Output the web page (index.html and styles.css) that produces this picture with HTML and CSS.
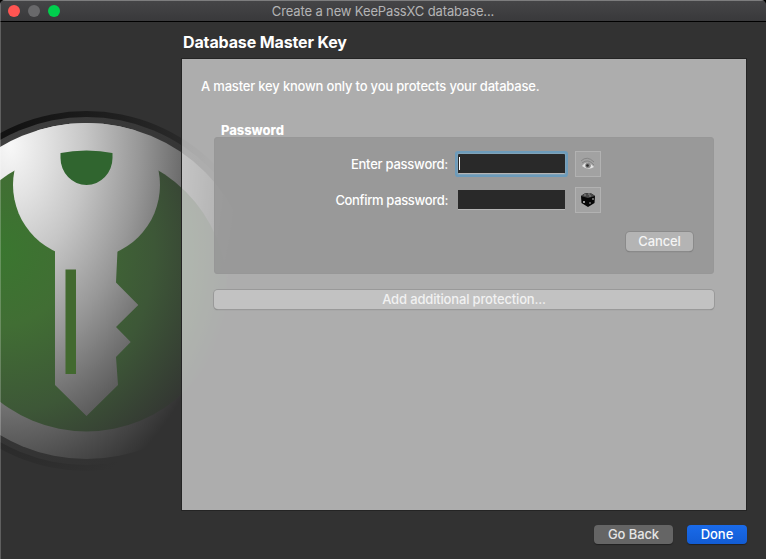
FILE: index.html
```html
<!DOCTYPE html>
<html lang="en">
<head>
<meta charset="utf-8">
<title>Create a new KeePassXC database...</title>
<link rel="stylesheet" href="styles.css">
</head>
<body>
<div class="window">
  <svg class="logo" width="300" height="400" viewBox="0 90 300 400" aria-hidden="true">
    <defs>
      <radialGradient id="metal" gradientUnits="userSpaceOnUse" cx="0" cy="0" r="1" gradientTransform="translate(10 145) scale(236 370)">
        <stop offset="0" stop-color="#f8f8f8"/>
        <stop offset=".15" stop-color="#e2e2e2"/>
        <stop offset=".32" stop-color="#c6c6c6"/>
        <stop offset=".55" stop-color="#979797"/>
        <stop offset=".73" stop-color="#6c6c6c"/>
        <stop offset=".87" stop-color="#4c4c4c"/>
        <stop offset="1" stop-color="#323232"/>
      </radialGradient>
      <radialGradient id="green" gradientUnits="userSpaceOnUse" cx="0" cy="0" r="1" gradientTransform="translate(0 250) scale(238 250)">
        <stop offset="0" stop-color="#3a762f"/>
        <stop offset=".3" stop-color="#416e34"/>
        <stop offset=".65" stop-color="#3d5737"/>
        <stop offset="1" stop-color="#323232"/>
      </radialGradient>
      <radialGradient id="rim" gradientUnits="userSpaceOnUse" cx="0" cy="0" r="1" gradientTransform="translate(10 130) scale(225 380)">
        <stop offset="0" stop-color="#121212"/>
        <stop offset=".5" stop-color="#202020"/>
        <stop offset=".85" stop-color="#2c2c2c"/>
        <stop offset="1" stop-color="#323232"/>
      </radialGradient>
      <radialGradient id="gap" gradientUnits="userSpaceOnUse" cx="0" cy="0" r="1" gradientTransform="translate(10 130) scale(220 370)">
        <stop offset="0" stop-color="#3e3e3e"/>
        <stop offset=".75" stop-color="#363636"/>
        <stop offset="1" stop-color="#323232"/>
      </radialGradient>
      <clipPath id="disc"><circle cx="86.5" cy="291" r="168"/></clipPath>
      <clipPath id="face"><circle cx="86.5" cy="291" r="140.5"/></clipPath>
    </defs>
    <circle cx="86.5" cy="291" r="180" fill="url(#rim)"/>
    <circle cx="86.5" cy="291" r="174" fill="url(#gap)"/>
    <circle cx="86.5" cy="291" r="168" fill="url(#metal)"/>
    <circle cx="86.5" cy="291" r="140.5" fill="url(#green)"/>
    <g clip-path="url(#disc)" fill="url(#metal)">
      <circle cx="86.5" cy="185" r="73.5"/>
      <path d="M55 240V385L86.5 416L118 385L116 357L130.7 342L116 327L138.3 305L116 282.5L118 240Z"/>
    </g>
    <g clip-path="url(#face)">
      <path d="M60.5 140V158A26 27 0 0 0 112.5 158V140Z" fill="#30652f"/>
    </g>
    <path d="M65.5 269.500H76V374H65.500Z" fill="#42692f"/>
  </svg>
  <header class="titlebar">
    <div class="lights"><i class="close"></i><i class="minimize"></i><i class="expand"></i></div>
    <span class="window-title">Create a new KeePassXC database...</span>
  </header>
  <main class="page">
    <h1>Database Master Key</h1>
    <section class="panel">
      <p class="intro">A master key known only to you protects your database.</p>
      <h2><span>Password</span></h2>
      <div class="group">
        <div class="row">
          <label class="enter" for="pw">Enter password:</label>
          <div class="field focused" id="pw"><i class="caret"></i></div>
          <button class="tool" aria-label="Show password"><svg width="16" height="16" viewBox="0 0 16 16"><path d="M1 5Q7-1 14 6M2 7Q8 2 14 9" fill="none" stroke="#858585"/><path d="M2 10Q7 3 14 11Q8 15 2 10Z" fill="#e4e4e4"/><circle cx="8" cy="9.500" r="2.800" fill="#888"/><circle cx="7.500" cy="9.500" r="1.300" fill="#292929"/></svg></button>
        </div>
        <div class="row">
          <label class="confirm" for="pw2">Confirm password:</label>
          <div class="field" id="pw2"></div>
          <button class="tool" aria-label="Generate password"><svg width="16" height="16" viewBox="0 0 16 16"><path d="M1 4Q4 1 8 1Q12 1 15 4L14.500 11L8 15L1.500 11Z" fill="#050505"/><path d="M1 4Q4 1 8 1Q12 1 15 4L8 6Z" fill="#484848"/><path d="M4 3h2M8 2h2M9 4h2" stroke="#888"/><circle cx="4" cy="10" r=".9" fill="#ddd"/><circle cx="10" cy="11" r=".7" fill="#ddd"/><circle cx="13" cy="7" r=".8" fill="#ddd"/></svg></button>
        </div>
        <button class="button cancel"><span>Cancel</span></button>
      </div>
      <button class="button protection"><span>Add additional protection...</span></button>
    </section>
  </main>
  <footer class="actions">
    <button class="button back"><span>Go Back</span></button>
    <button class="button done"><span>Done</span></button>
  </footer>
</div>
</body>
</html>
```
FILE: styles.css
```css
* { box-sizing: border-box; }
body { margin: 0; background: #000; }
.window {
  position: relative;
  width: 766px;
  height: 559px;
  overflow: hidden;
  background: #323232;
  border-radius: 5px 5px 0 0;
  color: #fff;
  font: 500 13px/16px Inter, "Liberation Sans", sans-serif;
}
.window::after { content: ""; position: absolute; left: 0; top: 0; bottom: 0; width: 1px; background: rgba(255, 255, 255, .22); }
.logo { position: absolute; left: 0; top: 90px; }
.titlebar {
  position: relative;
  height: 22px;
  display: flex;
  align-items: center;
  justify-content: center;
  background: linear-gradient(#454547, #39393b);
  border-top: 1px solid #7d7d7e;
  border-bottom: 1px solid #000;
}
.lights { position: absolute; left: 8px; top: 4px; display: flex; gap: 8px; }
.lights i { width: 12px; height: 12px; border-radius: 50%; }
.close { background: #ff5552; }
.minimize { background: #69696b; }
.expand { background: #00cf4d; }
.window-title { font-weight: 400; color: #b4b4b5; letter-spacing: -.14px; }
.page { position: relative; padding: 11px 19px 0 181px; }
h1 { margin: 0 0 6px 2px; font-size: 16px; line-height: 19px; font-weight: 700; white-space: nowrap; letter-spacing: -.13px; }
.panel {
  height: 453px;
  padding: 19px 31px 0 32px;
  border: 1px solid #242424;
  background: rgba(255, 255, 255, .6);
  background-clip: padding-box;
}
.intro { margin: 0 0 0 -13px; height: 44px; white-space: nowrap; letter-spacing: -.19px; }
h2 { margin: 0 0 0 7px; height: 15px; font-size: 13px; line-height: 16px; font-weight: 800; letter-spacing: -.05px; }
.group {
  width: 500px;
  height: 137px;
  padding: 13px 20px 0 0;
  border: 1px solid #979797;
  border-radius: 3px;
  background: rgba(148, 148, 148, .78);
}
.row { display: flex; height: 26px; margin-bottom: 10px; }
label { width: 233px; text-align: right; line-height: 26px; white-space: nowrap; }
.enter { letter-spacing: -.25px; }
.confirm { letter-spacing: -.34px; }
.field { width: 107px; height: 20px; margin: 3px 10px 0 10px; background: #292929; border-bottom: 1px solid #b6b6b6; }
.focused { box-shadow: 0 0 0 1px #7fa2b8, 0 0 0 3px #6d9bba; border-radius: 1px; }
.caret { display: block; width: 1px; height: 13px; margin: 3px 0 0 1px; background: #fff; }
button { font: inherit; color: inherit; padding: 0; border: 0; }
.tool { width: 26px; height: 26px; display: flex; align-items: center; justify-content: center; background: #a2a2a2; border: 1px solid #b2b2b2; }
.button { display: block; border-radius: 4px; line-height: 19px; white-space: nowrap; }
.cancel { width: 67px; height: 19px; margin: 19px 0 0 auto; background: #b4b4b4; color: #f4f4f4; box-shadow: 0 0 0 1px #8a8a8a, 0 1px 1px #666; letter-spacing: -.1px; }
.protection { width: 500px; height: 19px; margin: 16px 0 0; background: rgba(199, 199, 199, .8); color: #f1f1f1; box-shadow: 0 0 0 1px #999, 0 1px 1px #777; letter-spacing: -.16px; }
.actions { position: relative; display: flex; justify-content: flex-end; gap: 14px; padding: 14px 19px 0 0; }
.back { width: 79px; height: 19px; background: #656565; color: #e5e5e5; box-shadow: 0 1px 1px #202020; letter-spacing: -.1px; }
.done { width: 60px; height: 19px; background: linear-gradient(#1a6bea, #125cd4); box-shadow: 0 1px 1px #202020; }
```
